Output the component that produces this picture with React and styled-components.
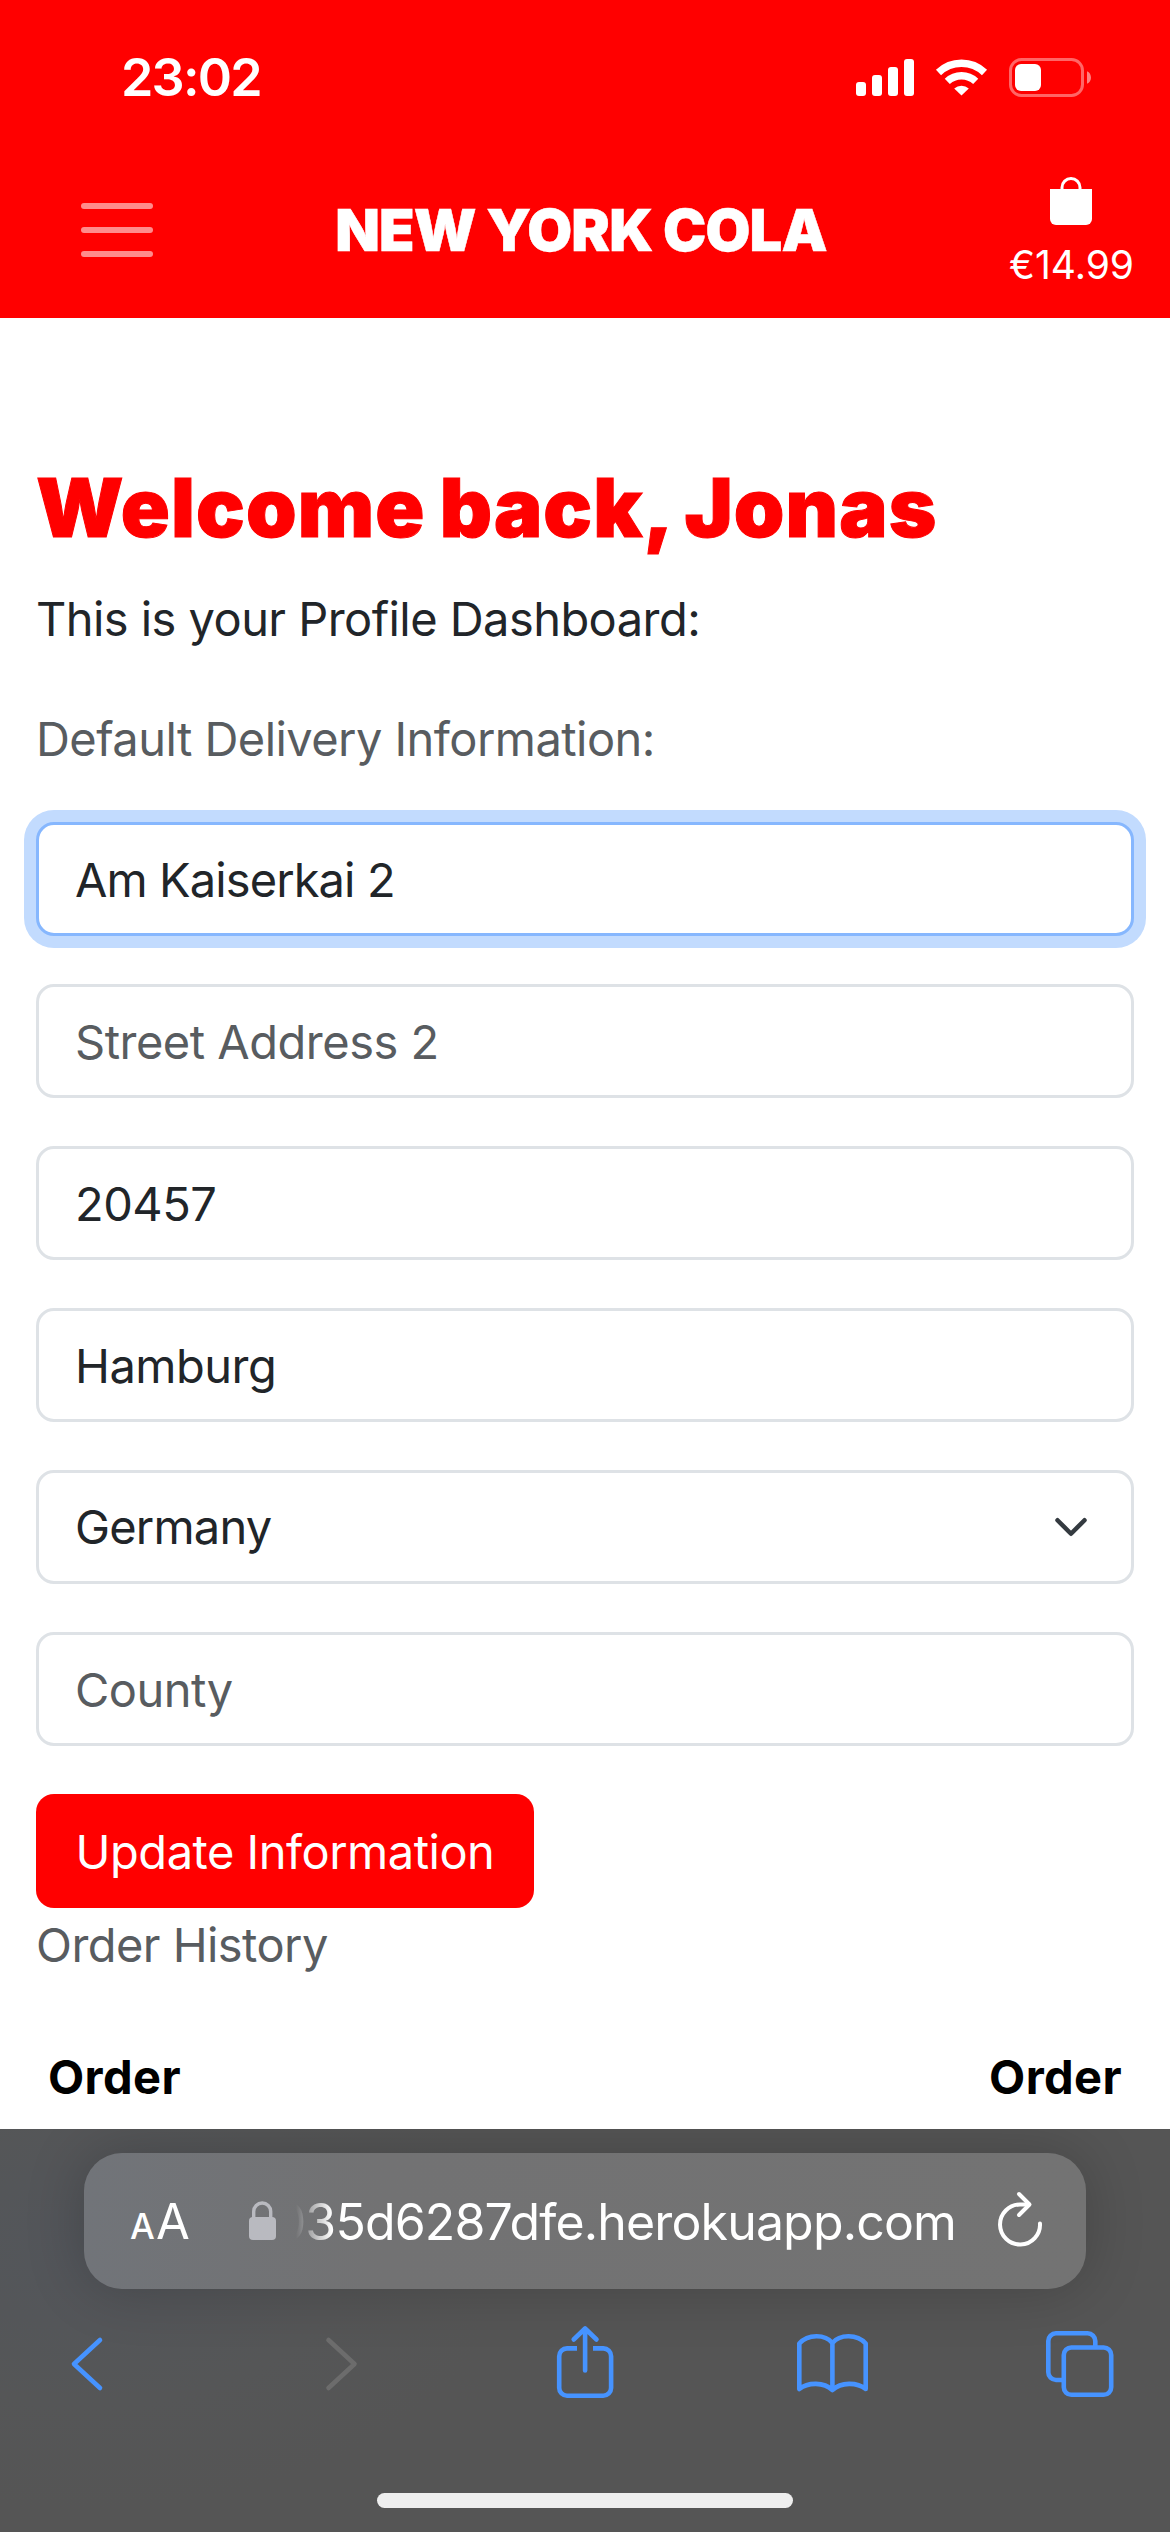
import React from "react";
import styled, { createGlobalStyle } from "styled-components";

const Global = createGlobalStyle`
  *, *::before, *::after { box-sizing: border-box; }
  html, body { margin: 0; background: #fff; }
  body { width: 1170px; height: 2532px; overflow: hidden; font-family: Inter, "Liberation Sans", sans-serif; }
`;

const Screen = styled.div`
  width: 1170px;
  height: 2532px;
  display: flex;
  flex-direction: column;
  overflow: hidden;
  background: #fff;
`;

const Header = styled.header`
  flex: none;
  height: 318px;
  background: #ff0000;
  color: #fff;
`;

const StatusBar = styled.div`
  height: 156px;
  padding: 0 76px 0 121px;
  display: flex;
  align-items: center;
  justify-content: space-between;
  svg { display: block; }
`;

const Clock = styled.span`
  font-size: 52px;
  line-height: 60px;
  font-weight: 600;
  letter-spacing: -1.8px;
`;

const NavBar = styled.nav`
  height: 162px;
  padding: 0 36px 0 81px;
  display: flex;
  align-items: center;
  justify-content: space-between;
`;

const Toggler = styled.button`
  width: 72px;
  height: 54px;
  margin-top: -14px;
  padding: 0;
  border: 0;
  background: none;
  display: flex;
  flex-direction: column;
  justify-content: space-between;
  span { display: block; width: 100%; height: 6px; border-radius: 3px; background: rgba(255, 255, 255, 0.55); }
`;

const Brand = styled.a`
  font-size: 58px;
  line-height: 72px;
  font-weight: 900;
  letter-spacing: -0.9px;
  -webkit-text-stroke: 0.5px #fff;
  white-space: nowrap;
  margin-top: -14px;
`;

const Bag = styled.a`
  margin-top: -9px;
  display: flex;
  flex-direction: column;
  align-items: center;
  gap: 17px;
  font-size: 39px;
  line-height: 46px;
  svg { display: block; }
`;

const Main = styled.main`
  flex: 1;
  min-height: 0;
  padding: 147px 36px 0;
  overflow: hidden;
`;

const Title = styled.h1`
  margin: 0;
  color: #ff0000;
  font-size: 81px;
  line-height: 86px;
  font-weight: 900;
  white-space: nowrap;
  letter-spacing: 1.1px;
  word-spacing: -3px;
  -webkit-text-stroke: 1px #ff0000;
`;

const Text = styled.p`
  margin: ${(p) => p.$top || 0}px 0 0;
  font-size: 47px;
  line-height: 72px;
  color: ${(p) => (p.$muted ? "#585c60" : "#212529")};
  letter-spacing: -0.55px;
  white-space: nowrap;
`;

const Form = styled.form`
  margin-top: 47px;
  display: flex;
  flex-direction: column;
  align-items: flex-start;
  gap: 48px;
`;

const Field = styled.input`
  width: 100%;
  height: 114px;
  padding: 0 36px;
  border: 3px solid ${(p) => (p.$active ? "#86b7fe" : "#dee2e6")};
  border-radius: 18px;
  box-shadow: ${(p) => (p.$active ? "0 0 0 12px #c2dbfe" : "none")};
  background: #fff;
  outline: 0;
  font: 400 47px/72px Inter, "Liberation Sans", sans-serif;
  letter-spacing: ${(p) => p.$track || -0.5}px;
  color: #212529;
  &::placeholder { color: #585c60; opacity: 1; }
`;

const SelectBox = styled.div`
  width: 100%;
  height: 114px;
  padding: 0 42px 0 36px;
  border: 3px solid #dee2e6;
  border-radius: 18px;
  display: flex;
  align-items: center;
  justify-content: space-between;
  font-size: 47px;
  line-height: 72px;
  letter-spacing: -0.8px;
  color: #212529;
  svg { display: block; }
`;

const Submit = styled.button`
  width: 498px;
  height: 114px;
  padding: 1px 0 0;
  border: 0;
  border-radius: 18px;
  background: #ff0000;
  color: #fff;
  font: 400 47px/72px Inter, "Liberation Sans", sans-serif;
  letter-spacing: -0.5px;
  white-space: nowrap;
`;

const TableHead = styled.div`
  margin-top: 60px;
  padding: 0 12px;
  display: flex;
  justify-content: space-between;
  font-size: 47px;
  line-height: 72px;
  font-weight: 700;
  letter-spacing: 0.4px;
  color: #000;
`;

const Browser = styled.footer`
  flex: none;
  height: 403px;
  padding-top: 24px;
  overflow: hidden;
  background: radial-gradient(ellipse 420px 260px at 90px 120px, #53565b 0%, #555657 60%, #555 100%);
  display: flex;
  flex-direction: column;
  align-items: center;
`;

const AddressBar = styled.div`
  flex: none;
  width: 1002px;
  height: 136px;
  padding: 0 42px 0 46px;
  border-radius: 38px;
  background: linear-gradient(90deg, #717479 0%, #727273 30%, #737373 100%);
  box-shadow: 0 0 60px rgba(0, 0, 0, 0.2);
  display: flex;
  align-items: center;
  color: #fff;
  svg { display: block; flex: none; }
`;

const TextSize = styled.span`
  width: 117px;
  padding-top: 5px;
  display: flex;
  align-items: baseline;
  font-size: 49px;
  line-height: 60px;
  small { width: 26px; font-size: 35px; font-weight: 500; }
`;

const Url = styled.span`
  margin: 2px 40px 0 14px;
  flex: 1;
  min-width: 0;
  overflow: hidden;
  display: flex;
  justify-content: flex-end;
  font-size: 50px;
  line-height: 64px;
  letter-spacing: -0.85px;
  white-space: nowrap;
  mask-image: linear-gradient(90deg, transparent 4px, #000 40px);
`;

const Tools = styled.div`
  flex: none;
  width: 100%;
  height: 150px;
  padding: 0 52px;
  display: flex;
  align-items: center;
  justify-content: space-between;
`;

const Tool = styled.svg`
  display: block;
  width: 74px;
  height: 80px;
  fill: none;
  stroke: ${(p) => (p.$disabled ? "#6c6c6c" : "#4693ff")};
  stroke-width: 4.6;
  stroke-linecap: ${(p) => (p.$cap || "round")};
  stroke-linejoin: round;
`;

const HomeBar = styled.div`
  flex: none;
  width: 416px;
  height: 15px;
  margin-top: 54px;
  border-radius: 8px;
  background: #eee;
`;

const StatusIcons = () => (
  <svg width="238" height="44" viewBox="856 56 238 44" fill="#fff">
    <rect x="856" y="82" width="10" height="14" rx="3" />
    <rect x="872" y="75" width="10" height="21" rx="3" />
    <rect x="888" y="67" width="10" height="29" rx="3" />
    <rect x="904" y="59" width="10" height="37" rx="3" />
    <g fill="none" stroke="#fff" strokeWidth="7.4">
      <path d="M938.5 72.5A33.3 33.3 0 0 1 984.5 72.5" />
      <path d="M947.3 81.4A20.6 20.6 0 0 1 975.7 81.4" />
    </g>
    <path d="M954.2 88.4A11.3 11.3 0 0 1 968.8 88.4L961.5 95.6Z" />
    <rect x="1010.5" y="59.5" width="72" height="36" rx="11" fill="none" stroke="#fff" strokeOpacity="0.4" strokeWidth="3" />
    <path d="M1087 71.2C1092.3 73.5 1092.3 81.5 1087 83.8Z" fillOpacity="0.5" />
    <rect x="1015" y="64" width="26" height="27" rx="6" />
  </svg>
);

export default function App() {
  return (
    <Screen>
      <Global />
      <Header>
        <StatusBar>
          <Clock>23:02</Clock>
          <StatusIcons />
        </StatusBar>
        <NavBar>
          <Toggler aria-label="Menu"><span /><span /><span /></Toggler>
          <Brand>NEW YORK COLA</Brand>
          <Bag>
            <svg width="42" height="48" viewBox="0 0 42 48" fill="#fff">
              <path d="M0 12H42V42a6 6 0 0 1-6 6H6a6 6 0 0 1-6-6Z" />
              <path d="M12 13V10.5a9 9 0 0 1 18 0V13" fill="none" stroke="#fff" strokeWidth="3" />
            </svg>
            <span>€14.99</span>
          </Bag>
        </NavBar>
      </Header>
      <Main>
        <Title>Welcome back, Jonas</Title>
        <Text $top={32}>This is your Profile Dashboard:</Text>
        <Text $muted $top={48}>Default Delivery Information:</Text>
        <Form>
          <Field $active $track={-0.9} defaultValue="Am Kaiserkai 2" />
          <Field placeholder="Street Address 2" />
          <Field defaultValue="20457" />
          <Field defaultValue="Hamburg" />
          <SelectBox>
            <span>Germany</span>
            <svg width="36" height="36" viewBox="0 0 16 16" fill="none" stroke="#343a40" strokeWidth="2" strokeLinecap="round" strokeLinejoin="round">
              <path d="m2 5 6 6 6-6" />
            </svg>
          </SelectBox>
          <Field placeholder="County" />
          <Submit type="button">Update Information</Submit>
        </Form>
        <Text $muted $top={1}>Order History</Text>
        <TableHead><span>Order</span><span>Order</span></TableHead>
      </Main>
      <Browser>
        <AddressBar>
          <TextSize><small>A</small>A</TextSize>
          <svg width="31" height="44" viewBox="247 2199 31 44" fill="#b9bac0">
            <rect x="249" y="2217" width="27" height="23" rx="4" />
            <path d="M253.7 2218V2211.5a8.5 8.5 0 0 1 17 0V2218" fill="none" stroke="#b9bac0" strokeWidth="3.4" />
          </svg>
          <Url>035d6287dfe.herokuapp.com</Url>
          <svg width="48" height="60" viewBox="996 2191 48 60" fill="none" stroke="#fff" strokeWidth="4" strokeLinecap="round" strokeLinejoin="round">
            <path d="M1040 2223.5A20 20 0 1 1 1020 2204.5H1029" />
            <path d="M1019 2194L1029.5 2204.5L1019 2215" />
          </svg>
        </AddressBar>
        <Tools>
          <Tool viewBox="52 2324 74 80"><path d="M100 2340L74 2364L100 2388" /></Tool>
          <Tool $disabled viewBox="300 2324 74 80"><path d="M328.5 2340L354.5 2364L328.5 2388" /></Tool>
          <Tool $cap="butt" viewBox="548 2324 74 80">
            <path d="M577 2348.4H567A7.8 7.8 0 0 0 559.2 2356.2V2388A7.8 7.8 0 0 0 567 2395.7H603.3A7.8 7.8 0 0 0 611.1 2388V2356.2A7.8 7.8 0 0 0 603.3 2348.4H593" />
            <g strokeLinecap="round">
              <path d="M585.1 2370.5V2329M573.7 2339.5L585.1 2328.5L596.5 2339.5" />
            </g>
          </Tool>
          <Tool viewBox="796 2324 74 80">
            <path d="M832.4 2390C824 2382 808 2382 799.3 2389V2343.5C808 2334 825 2334 832.4 2343C840 2334 857 2334 865.7 2343.5V2389C857 2382 841 2382 832.4 2390V2343" />
          </Tool>
          <Tool viewBox="1044 2324 74 80">
            <path d="M1062 2380H1056A7.7 7.7 0 0 1 1048.3 2372.3V2341A7.7 7.7 0 0 1 1056 2333.3H1087.6A7.7 7.7 0 0 1 1095.3 2341V2346" />
            <rect x="1063.8" y="2347.5" width="47.4" height="47.3" rx="7.5" />
          </Tool>
        </Tools>
        <HomeBar />
      </Browser>
    </Screen>
  );
}
